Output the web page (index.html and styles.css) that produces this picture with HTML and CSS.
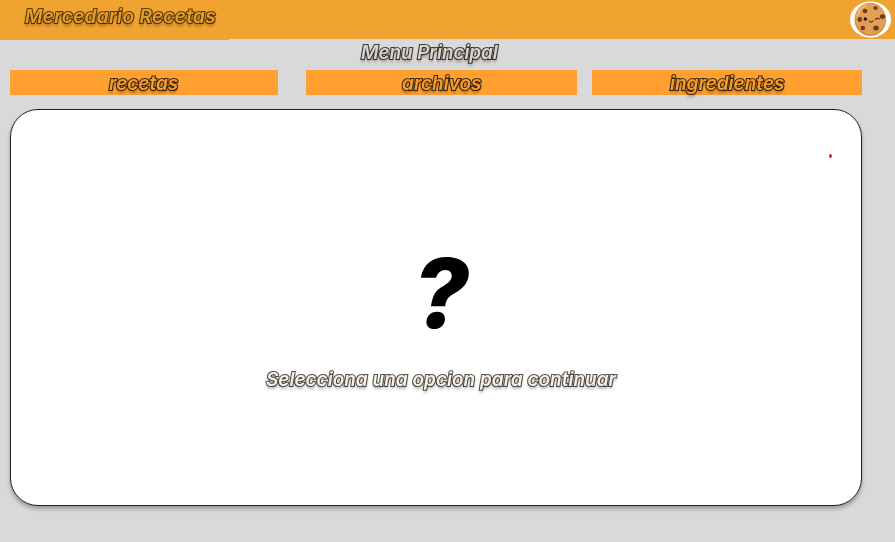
FILE: index.html
```html
<!DOCTYPE html>
<html lang="es">
<head>
<meta charset="utf-8">
<title>Mercedario Recetas</title>
<link rel="stylesheet" href="styles.css">
</head>
<body>
<header class="topbar">
  <div class="brand"><span class="label brand-text">Mercedario Recetas</span></div>
  <svg class="logo" viewBox="0 0 42 37">
    <ellipse cx="20.5" cy="18.5" rx="20.5" ry="18" fill="#fff"/>
    <ellipse cx="20.3" cy="18.4" rx="15.8" ry="16.6" fill="#d48d43"/>
    <ellipse cx="20.3" cy="17.6" rx="15" ry="15.4" fill="#e2a055"/>
    <path d="M7.5 14Q9.5 7 16 4.5" stroke="#edbb7c" stroke-width="2" fill="none" stroke-linecap="round"/>
    <g fill="#6e3b21">
      <circle cx="15" cy="10" r="2.3"/>
      <circle cx="25.5" cy="7" r="2.1"/>
      <ellipse cx="32.5" cy="15.5" rx="2.7" ry="2.3"/>
      <circle cx="9.8" cy="18.5" r="2.4"/>
      <circle cx="12.8" cy="27" r="2.3"/>
      <ellipse cx="26" cy="27" rx="2.8" ry="2.5"/>
    </g>
    <circle cx="15.3" cy="18" r="1.7" fill="#241616"/>
    <path d="M25.5 18.4Q27.3 16.2 29.2 18M19.2 20Q21 22.2 23 20" stroke="#3c2018" stroke-width="1.1" fill="none" stroke-linecap="round"/>
    <g fill="#f9857a">
      <ellipse cx="13.8" cy="21.7" rx="2.2" ry="1.5"/>
      <ellipse cx="28.4" cy="20.8" rx="2.2" ry="1.5"/>
    </g>
  </svg>
</header>
<main class="page">
  <h1 class="heading"><span class="label heading-text">Menu Principal</span></h1>
  <nav class="tabs">
    <a class="tab"><span class="label">recetas</span></a>
    <a class="tab"><span class="label">archivos</span></a>
    <a class="tab"><span class="label">ingredientes</span></a>
  </nav>
  <section class="panel">
    <i class="dot"></i>
    <div class="question">?</div>
    <p class="hint"><span class="label hint-text">Selecciona una opcion para continuar</span></p>
  </section>
</main>
</body>
</html>
```
FILE: styles.css
```css
* { box-sizing: border-box; }
body {
  margin: 0;
  height: 542px;
  overflow: hidden;
  background: #d9d9d9;
  font-family: Inter, "Open Sans", sans-serif;
  font-style: italic;
  font-feature-settings: "cv11" 1;
}
.topbar {
  display: flex;
  justify-content: space-between;
  height: 39px;
  background: #f0a330;
}
.brand {
  width: 229px;
  height: 40px;
  padding: 4px 0 0 25px;
  background: #f0a330;
}
.logo { width: 42px; height: 37px; margin: 1px 3px 0 0; }
.label {
  display: inline-block;
  white-space: nowrap;
  font-size: 19px;
  line-height: 26px;
  font-weight: 600;
  paint-order: stroke fill;
  -webkit-text-stroke: 2.2px rgba(30, 22, 10, .85);
  text-shadow: 0 3px 3px rgba(0, 0, 0, .35);
  will-change: transform;
}
.brand-text { color: #e79b2b; letter-spacing: .33px; -webkit-text-stroke-color: rgba(60, 38, 5, .8); }
.page { padding: 0 33px 0 10px; }
.heading {
  margin: 0;
  height: 31px;
  padding: 1px 0 0 351px;
  font-size: 19px;
}
.heading-text { color: #ddd3c8; letter-spacing: -.1px; -webkit-text-stroke-color: rgba(30, 30, 30, .85); }
.tabs {
  display: grid;
  grid-template-columns: 268px 271px 270px;
  column-gap: 28px;
  height: 25px;
}
.tab { height: 25px; padding-top: 1px; background: #ffa031; text-align: center; color: #f99b2e; }
.tab:last-child { margin-left: -13px; margin-right: 13px; }
.panel {
  display: flex;
  flex-direction: column;
  align-items: center;
  position: relative;
  height: 397px;
  margin-top: 14px;
  padding: 125px 0 0 10px;
  border: 1px solid #222;
  border-radius: 28px;
  background: #fff;
  box-shadow: 0 3px 4px rgba(0, 0, 0, .3);
}
.dot {
  position: absolute;
  top: 44px;
  right: 29px;
  width: 3px;
  height: 4px;
  border-radius: 50%;
  background: #f01c1c;
}
.question { font-size: 96px; line-height: 116px; font-weight: 800; color: #000; }
.hint { margin: 16px 0 0; }
.hint-text { color: #faeee0; -webkit-text-stroke-color: rgba(40, 40, 40, .8); }
```
